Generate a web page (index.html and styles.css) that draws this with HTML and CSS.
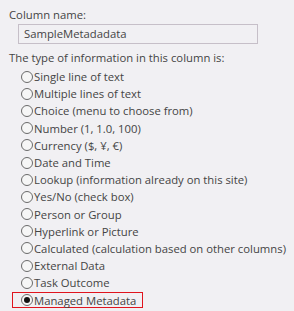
FILE: index.html
```html
<!DOCTYPE html>
<html>
<head>
<meta charset="utf-8">
<link rel="stylesheet" href="styles.css">
</head>
<body>
<div class="panel">
  <div class="label first">Column name:</div>
  <div class="input">SampleMetadadata</div>
  <div class="label second">The type of information in this column is:</div>
  <ul class="options">
    <li><span class="radio"></span>Single line of text</li>
    <li><span class="radio"></span>Multiple lines of text</li>
    <li><span class="radio"></span>Choice (menu to choose from)</li>
    <li><span class="radio"></span>Number (1, 1.0, 100)</li>
    <li><span class="radio"></span>Currency ($, ¥, €)</li>
    <li><span class="radio"></span>Date and Time</li>
    <li><span class="radio"></span>Lookup (information already on this site)</li>
    <li><span class="radio"></span>Yes/No (check box)</li>
    <li><span class="radio"></span>Person or Group</li>
    <li><span class="radio"></span>Hyperlink or Picture</li>
    <li><span class="radio"></span>Calculated (calculation based on other columns)</li>
    <li><span class="radio"></span>External Data</li>
    <li><span class="radio"></span>Task Outcome</li>
    <li class="selected"><span class="radio checked"></span>Managed Metadata</li>
  </ul>
</div>
</body>
</html>
```
FILE: styles.css
```css
html, body {
  margin: 0;
  padding: 0;
  background: #f1f0f3;
}
body {
  width: 294px;
  height: 311px;
  overflow: hidden;
  font-family: "Open Sans", "Noto Sans", sans-serif;
  font-size: 11.3px;
  color: #444444;
}
.panel {
  padding: 6px 0 0 9px;
}
.label {
  line-height: 17px;
  white-space: nowrap;
}
.input {
  box-sizing: border-box;
  margin: 1px 0 0 9px;
  width: 240px;
  height: 20px;
  border: 1px solid #c6bfc8;
  padding: 0 0 0 5px;
  line-height: 18px;
}
.second {
  margin-top: 5px;
}
.options {
  list-style: none;
  margin: 0;
  padding: 2px 0 0 0;
}
.options li {
  display: flex;
  align-items: center;
  height: 17.2px;
  white-space: nowrap;
  padding-left: 12px;
}
.radio {
  box-sizing: border-box;
  width: 12px;
  height: 12px;
  border: 1px solid #6a6a6a;
  border-radius: 50%;
  background: #f6f6f6;
  margin-right: 1px;
  flex: none;
  display: flex;
  align-items: center;
  justify-content: center;
}
.radio.checked::after {
  content: "";
  width: 6px;
  height: 6px;
  border-radius: 50%;
  background: #111111;
}
.options li.selected {
  margin-left: 3px;
  padding-left: 8px;
  width: 131px;
  border: 1px solid #e0141e;
  box-sizing: border-box;
  height: 16px;
  margin-top: 0.6px;
}
```
